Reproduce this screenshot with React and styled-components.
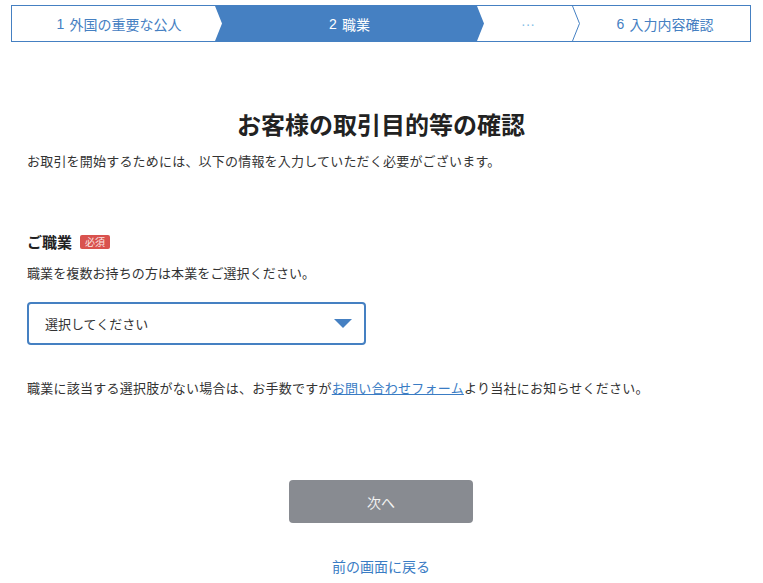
import React from "react";
import styled, { createGlobalStyle } from "styled-components";

const Global = createGlobalStyle`
  html, body {
    margin: 0;
    padding: 0;
    background: #fff;
  }
  body {
    font-family: "Noto Sans CJK JP", "Noto Sans", sans-serif;
    color: #333;
  }
`;

const BLUE = "#4580c2";

const Page = styled.div`
  width: 763px;
  padding: 5px 12px 0 11px;
  box-sizing: border-box;
`;

const Stepper = styled.ol`
  display: flex;
  height: 37px;
  margin: 0;
  padding: 0;
  list-style: none;
  border: 1px solid ${BLUE};
  box-sizing: border-box;
`;

const Step = styled.li`
  flex: 0 0 ${(p) => p.$w}px;
  display: flex;
  align-items: center;
  justify-content: center;
  gap: 5px;
  padding-left: ${(p) => p.$pl || 0}px;
  box-sizing: border-box;
  font-size: 14px;
  color: ${(p) => (p.$active ? "#fff" : p.$muted ? "#86c0e6" : BLUE)};
  background: ${(p) => (p.$active ? BLUE : "transparent")};
  clip-path: ${(p) =>
    p.$active
      ? "polygon(0 0, calc(100% - 7px) 0, 100% 50%, calc(100% - 7px) 100%, 0 100%, 7px 50%)"
      : "none"};
`;

const Num = styled.span`
  font-family: "Liberation Sans", Arial, sans-serif;
`;

const Sep = styled.svg`
  flex: 0 0 8px;
  height: 100%;
  display: block;
`;

const Main = styled.main`
  padding: 0 16px;
`;

const Title = styled.h1`
  margin: 64px 0 0;
  font-size: 24px;
  line-height: 36px;
  font-weight: 700;
  color: #222;
  text-align: center;
`;

const Lead = styled.p`
  margin: 9px 0 0;
  font-size: 13px;
  line-height: 20px;
  letter-spacing: 0.2px;
`;

const Label = styled.div`
  display: flex;
  align-items: center;
  gap: 8px;
  margin-top: 60px;
  font-size: 15px;
  line-height: 22px;
  font-weight: 700;
  color: #222;
`;

const Badge = styled.span`
  display: inline-block;
  background: #d9524e;
  color: #fbe3e3;
  font-size: 10px;
  font-weight: 400;
  line-height: 14px;
  padding: 0 5px;
  border-radius: 2px;
`;

const Help = styled.p`
  margin: 10px 0 0;
  font-size: 13px;
  line-height: 20px;
  letter-spacing: 0.1px;
`;

const Select = styled.div`
  display: flex;
  align-items: center;
  justify-content: space-between;
  width: 339px;
  height: 43px;
  margin-top: 19px;
  padding: 0 12px 0 16px;
  box-sizing: border-box;
  border: 2px solid ${BLUE};
  border-radius: 4px;
  font-size: 13px;
  color: #333;
`;

const Note = styled.p`
  margin: 33px 0 0;
  font-size: 13px;
  line-height: 20px;
  letter-spacing: 0.25px;
`;

const Link = styled.a`
  color: #3a7cc4;
  text-decoration: underline;
`;

const Actions = styled.div`
  display: flex;
  flex-direction: column;
  align-items: center;
  margin-top: 82px;
`;

const NextButton = styled.button`
  width: 184px;
  height: 43px;
  border: none;
  border-radius: 4px;
  background: #888b91;
  color: #f3f3f3;
  font-family: inherit;
  font-size: 14px;
`;

const Back = styled.a`
  margin-top: 33px;
  font-size: 14px;
  line-height: 20px;
  color: #3a7cc4;
  text-decoration: none;
`;

export default function App() {
  return (
    <Page>
      <Global />
      <Stepper>
        <Step $w={210} $pl={4}>
          <Num>1</Num>外国の重要な公人
        </Step>
        <Step $w={269} $active style={{ marginLeft: -7 }}>
          <Num>2</Num>職業
        </Step>
        <Step $w={88} $muted>
          <Num>···</Num>
        </Step>
        <Sep viewBox="0 0 8 35" preserveAspectRatio="none">
          <polyline
            points="0.5,0 7.5,17.5 0.5,35"
            fill="none"
            stroke={BLUE}
            strokeWidth="1"
          />
        </Sep>
        <Step $w={170}>
          <Num>6</Num>入力内容確認
        </Step>
      </Stepper>
      <Main>
        <Title>お客様の取引目的等の確認</Title>
        <Lead>
          お取引を開始するためには、以下の情報を入力していただく必要がございます。
        </Lead>
        <Label>
          ご職業<Badge>必須</Badge>
        </Label>
        <Help>職業を複数お持ちの方は本業をご選択ください。</Help>
        <Select>
          <span>選択してください</span>
          <svg width="18" height="9" viewBox="0 0 18 9">
            <polygon points="0,0 18,0 9,9" fill={BLUE} />
          </svg>
        </Select>
        <Note>
          職業に該当する選択肢がない場合は、お手数ですが
          <Link href="#">お問い合わせフォーム</Link>
          より当社にお知らせください。
        </Note>
        <Actions>
          <NextButton>次へ</NextButton>
          <Back href="#">前の画面に戻る</Back>
        </Actions>
      </Main>
    </Page>
  );
}
